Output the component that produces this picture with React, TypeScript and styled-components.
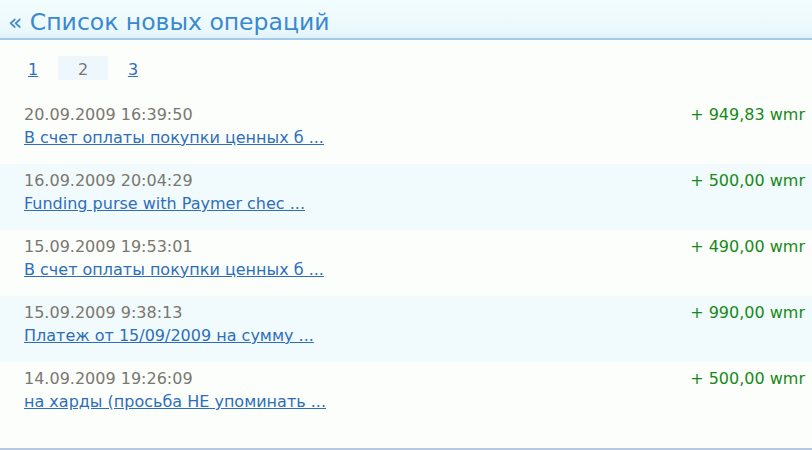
import React from "react";
import styled, { createGlobalStyle } from "styled-components";

const Global = createGlobalStyle`
  html, body { margin: 0; padding: 0; background: #fcfefc; }
  body { font-family: "DejaVu Sans", Verdana, sans-serif; }
`;

const Page = styled.div`
  width: 812px;
  height: 450px;
  box-sizing: border-box;
  border-bottom: 2px solid #b8c8e0;
  display: flex;
  flex-direction: column;
  background: #fcfefc;
`;

const Header = styled.div`
  height: 40px;
  box-sizing: border-box;
  border-bottom: 2px solid #a6c8ea;
  background: linear-gradient(#f1fcfd 0px, #ecf9fc 28px, #ddf1fb 40px);
  display: flex;
  align-items: center;
  padding: 6px 0 0 8px;
`;

const Title = styled.a`
  color: #3a88d0;
  font-size: 23.5px;
  text-decoration: none;
`;

const Pager = styled.div`
  display: flex;
  align-items: center;
  margin: 16px 0 0 8px;
  height: 24px;
`;

const PageLink = styled.a<{ $active?: boolean }>`
  width: 50px;
  height: 24px;
  padding-top: 3px;
  box-sizing: border-box;
  display: flex;
  align-items: center;
  justify-content: center;
  font-size: 16px;
  color: ${(p) => (p.$active ? "#777" : "#2e6eb8")};
  text-decoration: ${(p) => (p.$active ? "none" : "underline")};
  background: ${(p) => (p.$active ? "#eef8fc" : "transparent")};
`;

const List = styled.div`
  margin-top: 18px;
  display: flex;
  flex-direction: column;
`;

const Row = styled.div<{ $alt?: boolean }>`
  height: 66px;
  box-sizing: border-box;
  padding: 7px 7px 0 24px;
  display: flex;
  justify-content: space-between;
  background: ${(p) => (p.$alt ? "#f1fafd" : "transparent")};
`;

const Info = styled.div`
  display: flex;
  flex-direction: column;
  gap: 3px;
`;

const DateText = styled.div`
  color: #7a776e;
  font-size: 16px;
  line-height: 20px;
`;

const Desc = styled.a`
  color: #2e6eb8;
  font-size: 16px;
  line-height: 20px;
  text-decoration: underline;
`;

const Amount = styled.div`
  color: #168a16;
  font-size: 16px;
  line-height: 20px;
`;

const ops = [
  { date: "20.09.2009 16:39:50", desc: "В счет оплаты покупки ценных б ...", amount: "+ 949,83 wmr" },
  { date: "16.09.2009 20:04:29", desc: "Funding purse with Paymer chec ...", amount: "+ 500,00 wmr" },
  { date: "15.09.2009 19:53:01", desc: "В счет оплаты покупки ценных б ...", amount: "+ 490,00 wmr" },
  { date: "15.09.2009 9:38:13", desc: "Платеж от 15/09/2009 на сумму ...", amount: "+ 990,00 wmr" },
  { date: "14.09.2009 19:26:09", desc: "на харды (просьба НЕ упоминать ...", amount: "+ 500,00 wmr" },
];

export default function App() {
  return (
    <>
      <Global />
      <Page>
        <Header>
          <Title>« Список новых операций</Title>
        </Header>
        <Pager>
          <PageLink>1</PageLink>
          <PageLink $active>2</PageLink>
          <PageLink>3</PageLink>
        </Pager>
        <List>
          {ops.map((o, i) => (
            <Row key={i} $alt={i % 2 === 1}>
              <Info>
                <DateText>{o.date}</DateText>
                <Desc>{o.desc}</Desc>
              </Info>
              <Amount>{o.amount}</Amount>
            </Row>
          ))}
        </List>
      </Page>
    </>
  );
}
